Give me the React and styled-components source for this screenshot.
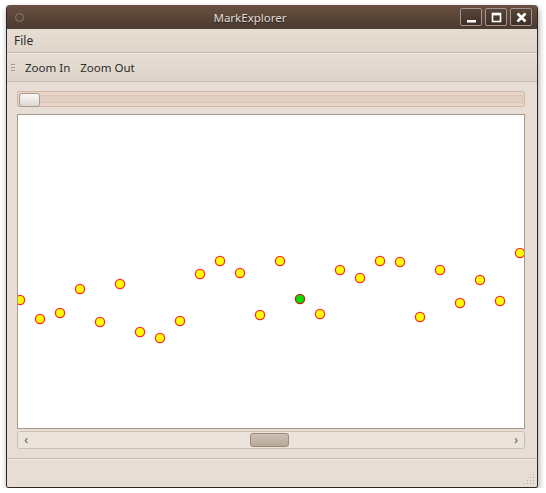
import React from 'react';
import styled, { createGlobalStyle } from 'styled-components';

const Global = createGlobalStyle`
  html, body { margin: 0; padding: 0; background: #ffffff; }
  body { font-family: "Noto Sans", "DejaVu Sans", sans-serif; }
  #root { padding: 5px 0 0 6px; }
`;

// dot centers in page coordinates (x, y)
const marks = [
  [20, 300], [40, 319], [60, 313], [80, 289], [100, 322], [120, 284], [140, 332],
  [160, 338], [180, 321], [200, 274], [220, 261], [240, 273], [260, 315], [280, 261],
  [300, 299, true], [320, 314], [340, 270], [360, 278], [380, 261], [400, 262],
  [420, 317], [440, 270], [460, 303], [480, 280], [500, 301], [520, 253],
];

const App = () => {
  return (
    <>
      <Global />
      <Ventana>
        <BarraTitulo>
          <Circulo />
          <Titulo>MarkExplorer</Titulo>
          <Botones>
            <BotonVentana>
              <svg width="11" height="11" viewBox="0 0 11 11"><rect x="1" y="8" width="9" height="2.5" fill="#fff" /></svg>
            </BotonVentana>
            <BotonVentana>
              <svg width="11" height="11" viewBox="0 0 11 11"><rect x="1.5" y="1.5" width="8" height="8" fill="none" stroke="#fff" strokeWidth="1.6" /><rect x="1" y="1" width="9" height="2.4" fill="#fff" /></svg>
            </BotonVentana>
            <BotonVentana>
              <svg width="11" height="11" viewBox="0 0 11 11"><path d="M1.5 1.5 L9.5 9.5 M9.5 1.5 L1.5 9.5" stroke="#fff" strokeWidth="2.6" /></svg>
            </BotonVentana>
          </Botones>
        </BarraTitulo>

        <Menu>
          <ItemMenu>File</ItemMenu>
        </Menu>

        <Herramientas>
          <Agarre>
            <span /><span /><span />
          </Agarre>
          <ItemHerramienta>Zoom In</ItemHerramienta>
          <ItemHerramienta>Zoom Out</ItemHerramienta>
        </Herramientas>

        <Central>
          <Deslizador>
            <Riel />
            <Perilla />
          </Deslizador>

          <Lienzo>
            <svg width="506" height="313" viewBox="0 0 506 313">
              {marks.map(([x, y, sel], i) => (
                <circle key={i} cx={x - 18} cy={y - 115} r="4.6"
                  fill={sel ? '#00e000' : '#ffff00'} stroke={sel ? '#c02020' : '#ff2a2a'} strokeWidth="1.3" />
              ))}
            </svg>
          </Lienzo>

          <Scroll>
            <Flecha>‹</Flecha>
            <Pista>
              <Manija />
            </Pista>
            <Flecha>›</Flecha>
          </Scroll>
        </Central>

        <Estado>
          <Grip viewBox="0 0 12 12" width="12" height="12">
            {[[10, 2], [10, 5], [7, 5], [10, 8], [7, 8], [4, 8], [10, 11], [7, 11], [4, 11], [1, 11]].map(([x, y], i) => (
              <rect key={i} x={x} y={y - 1} width="1" height="1" fill="#b8aca0" />
            ))}
          </Grip>
        </Estado>
      </Ventana>
    </>
  );
};

export default App;

const Ventana = styled.div`
  width: 532px;
  height: 483px;
  box-sizing: border-box;
  border: 1px solid #2e2620;
  border-top: none;
  border-radius: 4px 4px 3px 3px;
  background: #e6ddd4;
  display: flex;
  flex-direction: column;
  overflow: hidden;
  box-shadow: 1px 3px 6px rgba(0, 0, 0, 0.35);
`;

const BarraTitulo = styled.div`
  height: 24px;
  flex: none;
  background: linear-gradient(#6a5040, #4a3a2f);
  display: flex;
  align-items: center;
  position: relative;
  padding: 0 5px 0 8px;
`;

const Circulo = styled.div`
  width: 7px;
  height: 7px;
  border-radius: 50%;
  border: 1px solid #8a7a70;
  background: #5a4638;
`;

const Titulo = styled.div`
  flex: 1;
  text-align: center;
  color: #e4ddd4;
  font-size: 11.5px;
  text-shadow: 0 1px 1px #222;
  padding-left: 16px;
`;

const Botones = styled.div`
  display: flex;
  gap: 3px;
`;

const BotonVentana = styled.div`
  width: 20px;
  height: 16px;
  border: 1px solid #a09590;
  border-radius: 2px;
  background: linear-gradient(#5a4538, #3e3028);
  display: flex;
  align-items: center;
  justify-content: center;
`;

const Menu = styled.div`
  height: 23px;
  flex: none;
  background: linear-gradient(#e6ddd3, #dfd5cb);
  border-bottom: 1px solid #c9bcb0;
  box-shadow: 0 1px 0 #f0e9e2;
  display: flex;
  align-items: center;
  padding: 0 7px;
`;

const ItemMenu = styled.div`
  font-size: 12px;
  color: #2c2c2c;
`;

const Herramientas = styled.div`
  height: 27px;
  flex: none;
  margin-top: 1px;
  background: linear-gradient(#e6ddd4, #ddd3c9);
  border-bottom: 1px solid #c9bcb0;
  display: flex;
  align-items: center;
  padding: 0 4px;
  gap: 10px;
`;

const Agarre = styled.div`
  display: flex;
  flex-direction: column;
  gap: 2px;
  margin-right: 0px;

  span {
    display: block;
    width: 4px;
    height: 1px;
    background: #a89c90;
  }
`;

const ItemHerramienta = styled.div`
  font-size: 11.5px;
  color: #2c2c2c;
`;

const Central = styled.div`
  flex: none;
  display: flex;
  flex-direction: column;
  padding: 9px 12px 9px 10px;
  border-bottom: 1px solid #c4b6aa;
`;

const Deslizador = styled.div`
  height: 16px;
  box-sizing: border-box;
  border: 1px solid #d6b4a4;
  border-radius: 2px;
  background: #e8d6cc;
  position: relative;
  display: flex;
  align-items: center;
  padding: 0 1px;
`;

const Riel = styled.div`
  flex: 1;
  height: 8px;
  box-sizing: border-box;
  border: 1px solid #dcc0b2;
  background: #e2cfc4;
`;

const Perilla = styled.div`
  position: absolute;
  left: 1px;
  top: 1px;
  width: 19px;
  height: 12px;
  border: 1px solid #a89a90;
  border-radius: 3px;
  background: linear-gradient(#fbf9f7, #ddd6d0);
`;

const Lienzo = styled.div`
  margin-top: 7px;
  height: 315px;
  box-sizing: border-box;
  border: 1px solid #a89888;
  background: #ffffff;
  overflow: hidden;

  svg { display: block; }
`;

const Scroll = styled.div`
  margin-top: 2px;
  height: 18px;
  box-sizing: border-box;
  border: 1px solid #cbbfb3;
  border-radius: 3px;
  background: #ebe3dc;
  display: flex;
  align-items: center;
  padding: 0 4px;
`;

const Flecha = styled.div`
  width: 8px;
  font-size: 12px;
  line-height: 12px;
  color: #555;
  text-align: center;
`;

const Pista = styled.div`
  flex: 1;
  display: flex;
  justify-content: center;
  padding-right: 4px;
`;

const Manija = styled.div`
  width: 37px;
  height: 12px;
  border: 1px solid #9a8a7c;
  border-radius: 3px;
  background: linear-gradient(#cdbfb2, #b8a898);
`;

const Estado = styled.div`
  flex: 1;
  border-top: 1px solid #f2ece6;
  background: #e6ddd4;
  display: flex;
  align-items: flex-end;
  justify-content: flex-end;
  padding: 0 2px 2px 0;
`;

const Grip = styled.svg`
  display: block;
`;
